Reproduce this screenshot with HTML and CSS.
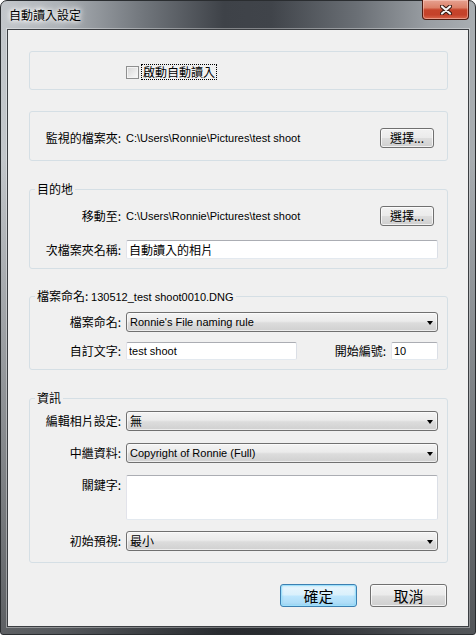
FILE: index.html
```html
<!DOCTYPE html>
<html lang="zh-Hant">
<head>
    <meta charset="UTF-8">
    <meta name="viewport" content="width=device-width, initial-scale=1.0">
    <title>自動讀入設定</title>
    <link rel="stylesheet" href="styles.css">
</head>
<body>

    <div class="window">
        <div class="titlebar">
            <span class="title">自動讀入設定</span>
            <button class="close" title="關閉">
                <svg width="12" height="10" viewBox="0 0 12 10">
                    <path d="M2 1.5L10 8.5M10 1.5L2 8.5" stroke="#3a1a12" stroke-width="4.2" stroke-linecap="round"/>
                    <path d="M2 1.5L10 8.5M10 1.5L2 8.5" stroke="#f4f4f4" stroke-width="2.2" stroke-linecap="round"/>
                </svg>
            </button>
        </div>

        <div class="client">
            <!-- enable -->
            <div class="group enable-box">
                <label class="checkbox">
                    <span class="box"></span>
                    <span class="focus">啟動自動讀入</span>
                </label>
            </div>

            <!-- watched folder -->
            <div class="group watch-box">
                <div class="row">
                    <span class="lbl">監視的檔案夾:</span>
                    <span class="path en">C:\Users\Ronnie\Pictures\test shoot</span>
                    <button class="btn small">選擇...</button>
                </div>
            </div>

            <!-- destination -->
            <fieldset class="group dest">
                <legend>目的地</legend>
                <div class="row">
                    <span class="lbl">移動至:</span>
                    <span class="path en">C:\Users\Ronnie\Pictures\test shoot</span>
                    <button class="btn small">選擇...</button>
                </div>
                <div class="row gap14">
                    <span class="lbl">次檔案夾名稱:</span>
                    <input class="textbox wide" type="text" value="自動讀入的相片">
                </div>
            </fieldset>

            <!-- file naming -->
            <fieldset class="group naming">
                <legend>檔案命名: <span class="en">130512_test shoot0010.DNG</span></legend>
                <div class="row">
                    <span class="lbl">檔案命名:</span>
                    <div class="combo"><span class="en">Ronnie's File naming rule</span><span class="arrow"></span></div>
                </div>
                <div class="row gap10">
                    <span class="lbl">自訂文字:</span>
                    <input class="textbox en custom" type="text" value="test shoot">
                    <span class="lbl-inline">開始編號:</span>
                    <input class="textbox en number" type="text" value="10">
                </div>
            </fieldset>

            <!-- info -->
            <fieldset class="group info">
                <legend>資訊</legend>
                <div class="row">
                    <span class="lbl">編輯相片設定:</span>
                    <div class="combo"><span>無</span><span class="arrow"></span></div>
                </div>
                <div class="row gap12">
                    <span class="lbl">中繼資料:</span>
                    <div class="combo"><span class="en">Copyright of Ronnie (Full)</span><span class="arrow"></span></div>
                </div>
                <div class="row gap12 top">
                    <span class="lbl">關鍵字:</span>
                    <textarea class="textbox keywords"></textarea>
                </div>
                <div class="row gap11">
                    <span class="lbl">初始預視:</span>
                    <div class="combo"><span>最小</span><span class="arrow"></span></div>
                </div>
            </fieldset>

            <div class="footer">
                <button class="btn big default">確定</button>
                <button class="btn big">取消</button>
            </div>
        </div>
    </div>

</body>
</html>
```

FILE: styles.css
```css
* {
    box-sizing: border-box;
}
html, body {
    margin: 0;
}
body {
    font-family: "Noto Sans CJK TC", "Liberation Sans", sans-serif;
    font-size: 12px;
    line-height: 16px;
    color: #000;
    background: #fff;
}
.en {
    font-family: "Liberation Sans", Arial, "Noto Sans CJK TC", sans-serif;
    font-size: 11px;
}

/* window frame */
.window {
    width: 476px;
    height: 635px;
    display: flex;
    flex-direction: column;
    padding: 0 6px 7px 6px;
    border: 1px solid #2a2d30;
    border-radius: 7px 7px 3px 3px;
    background:
        linear-gradient(to bottom, rgba(0, 0, 0, 0) 25%, rgba(25, 27, 30, 0.6) 100%),
        linear-gradient(to right, #c3c7cb 0%, #aeb3b8 12%, #71767c 30%, #3e4248 47%, #40444a 57%, #6a6f75 75%, #999ea3 90%, #a9aeb2 100%);
}
.titlebar {
    height: 28px;
    display: flex;
    align-items: flex-start;
}
.title {
    margin: 6px 0 0 2px;
    text-shadow: 0 0 4px #fff, 0 0 6px #fff, 0 0 8px rgba(255, 255, 255, 0.8);
}
.close {
    margin: -1px 0 0 auto;
    width: 47px;
    height: 20px;
    padding: 0;
    display: flex;
    align-items: center;
    justify-content: center;
    border: 1px solid #4e1a10;
    border-top: none;
    border-radius: 0 0 4px 4px;
    background: linear-gradient(#e6a190 0%, #dc8169 40%, #c6442b 52%, #c4412a 78%, #d9674c 100%);
    box-shadow: inset 0 0 0 1px rgba(255, 220, 210, 0.45);
}

/* client area */
.client {
    flex: 1;
    display: flex;
    flex-direction: column;
    padding: 21px 20px 0 21px;
    background: #f0f0f0;
    border: 1px solid #3b3e42;
    box-shadow: 0 0 0 1px rgba(255, 255, 255, 0.35);
}
.group {
    margin: 0;
    padding: 0 9px 0 0;
    min-width: 0;
    border: 1px solid #d5dfe5;
    border-radius: 3px;
}
fieldset.group legend {
    margin-left: 5px;
    padding: 0 2px;
    line-height: 16px;
}
.row {
    display: flex;
    align-items: center;
}
.row.top {
    align-items: flex-start;
}
.row.top .lbl {
    padding-top: 2px;
}
.gap10 { margin-top: 10px; }
.gap11 { margin-top: 11px; }
.gap12 { margin-top: 12px; }
.gap14 { margin-top: 14px; }
.lbl {
    flex: none;
    width: 91px;
    margin-right: 5px;
    text-align: right;
    white-space: nowrap;
}
.lbl-inline {
    margin: 0 5px 0 auto;
    white-space: nowrap;
}
.path {
    flex: 1;
}

.enable-box {
    height: 39px;
    display: flex;
    align-items: center;
    padding: 3px 0 0 96px;
}
.checkbox {
    display: flex;
    align-items: center;
}
.box {
    width: 13px;
    height: 13px;
    border: 1px solid #8e8f8f;
    background: linear-gradient(135deg, #d6d6d6 0%, #f0f0f0 70%, #fafafa 100%);
    box-shadow: inset 0 0 0 1px #f4f4f4;
}
.focus {
    margin-left: 2px;
    padding: 0 1px;
    line-height: 14px;
    border: 1px dotted #000;
}

.watch-box {
    margin-top: 21px;
    padding-top: 16px;
    padding-bottom: 12px;
}
.dest {
    margin-top: 20px;
    padding-top: 9px;
    padding-bottom: 9px;
}
.naming {
    margin-top: 19px;
    padding-top: 7px;
    padding-bottom: 9px;
}
.info {
    margin-top: 20px;
    padding-top: 5px;
    padding-bottom: 11px;
}

/* controls */
.btn {
    font-family: "Noto Sans CJK TC", sans-serif;
    color: #000;
    padding: 0;
    border: 1px solid #707070;
    border-radius: 3px;
    background: linear-gradient(#f2f2f2 0%, #ebebeb 48%, #dddddd 52%, #cfcfcf 100%);
    box-shadow: inset 0 0 0 1px rgba(255, 255, 255, 0.7);
}
.btn.small {
    width: 54px;
    height: 20px;
    margin-right: 4px;
    font-size: 12px;
    line-height: 16px;
}
.btn.big {
    width: 77px;
    height: 23px;
    font-size: 15px;
    line-height: 19px;
}
.btn.default {
    border-color: #3c7fb1;
    background: linear-gradient(#eaf6fd 0%, #d9f0fc 48%, #bee6fd 52%, #a7d9f5 100%);
    box-shadow: inset 0 0 0 1px #9ee0fb, inset 0 0 2px 1px rgba(100, 200, 240, 0.5);
}
.textbox {
    height: 19px;
    margin: 0;
    padding: 0 2px;
    border: 1px solid;
    border-color: #abadb3 #dbdfe6 #e3e9ef #e2e3ea;
    border-radius: 2px;
    background: #fff;
    color: #000;
    font-family: "Noto Sans CJK TC", sans-serif;
    font-size: 12px;
    outline: none;
}
.textbox.en {
    font-family: "Liberation Sans", Arial, sans-serif;
    font-size: 11px;
}
.textbox.wide {
    flex: 1;
}
.textbox.custom {
    width: 171px;
    height: 18px;
}
.textbox.number {
    width: 47px;
    height: 18px;
}
.textbox.keywords {
    flex: 1;
    height: 45px;
    resize: none;
}
.combo {
    flex: 1;
    height: 20px;
    display: flex;
    align-items: center;
    padding-left: 3px;
    border: 1px solid #707070;
    border-radius: 3px;
    background: linear-gradient(#f4f4f4 0%, #ebebeb 45%, #dcdcdc 55%, #d0d0d0 100%);
    box-shadow: inset 0 0 0 1px rgba(255, 255, 255, 0.6);
}
.arrow {
    margin: 1px 4px 0 auto;
    width: 0;
    height: 0;
    border-left: 3.5px solid transparent;
    border-right: 3.5px solid transparent;
    border-top: 4px solid #000;
}

.footer {
    margin: 21px 1px 0 0;
    display: flex;
    justify-content: flex-end;
    gap: 13px;
}
```
